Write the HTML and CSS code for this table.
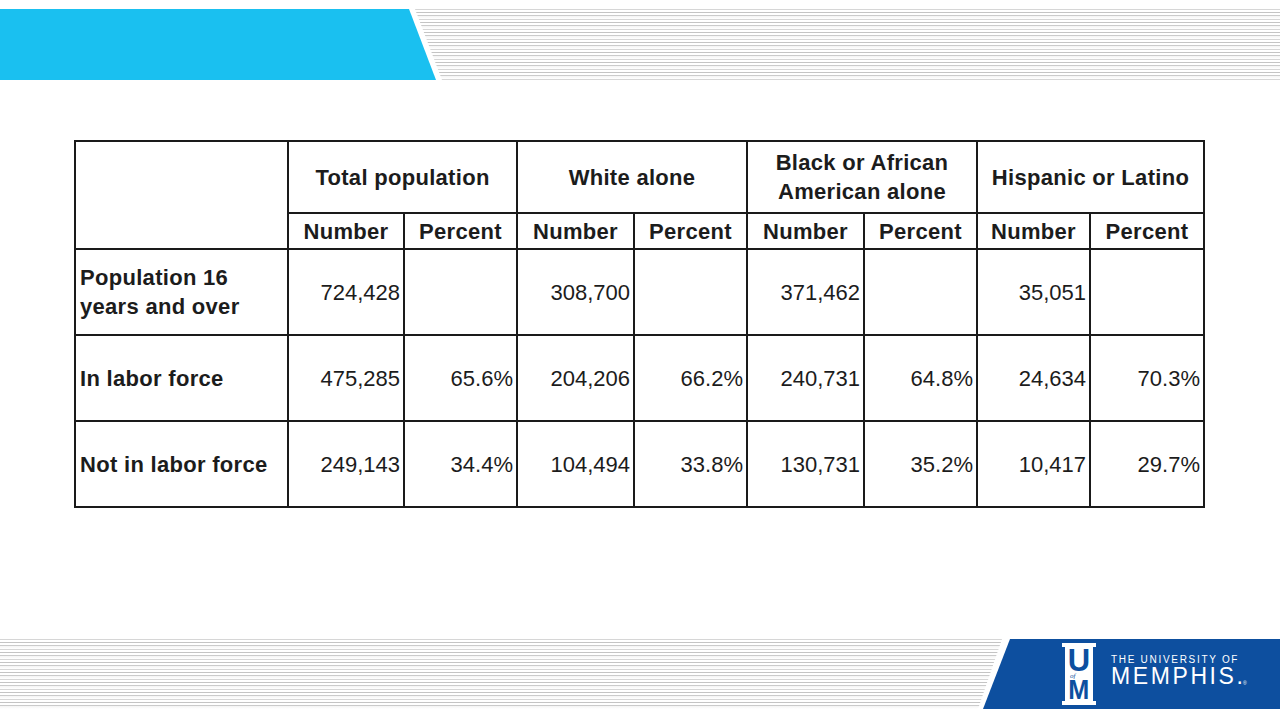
FILE: index.html
```html
<!DOCTYPE html>
<html lang="en">
<head>
<meta charset="utf-8">
<title>Labor force participation</title>
<link rel="stylesheet" href="styles.css">
</head>
<body>
<header class="top-band">
  <div class="cyan-block"></div>
  <div class="stripes top-stripes"></div>
</header>

<main class="content">
  <table class="data-table">
    <colgroup>
      <col class="c-label">
      <col class="c-num"><col class="c-pct">
      <col class="c-num2"><col class="c-pct">
      <col class="c-num2"><col class="c-pct">
      <col class="c-pct"><col class="c-pct2">
    </colgroup>
    <thead>
      <tr class="head-main">
        <th rowspan="2"></th>
        <th colspan="2">Total population</th>
        <th colspan="2">White alone</th>
        <th colspan="2">Black or African<br>American alone</th>
        <th colspan="2">Hispanic or Latino</th>
      </tr>
      <tr class="head-sub">
        <th>Number</th><th>Percent</th>
        <th>Number</th><th>Percent</th>
        <th>Number</th><th>Percent</th>
        <th>Number</th><th>Percent</th>
      </tr>
    </thead>
    <tbody>
      <tr>
        <th class="row-label">Population 16<br>years and over</th>
        <td>724,428</td><td></td>
        <td>308,700</td><td></td>
        <td>371,462</td><td></td>
        <td>35,051</td><td></td>
      </tr>
      <tr>
        <th class="row-label">In labor force</th>
        <td>475,285</td><td>65.6%</td>
        <td>204,206</td><td>66.2%</td>
        <td>240,731</td><td>64.8%</td>
        <td>24,634</td><td>70.3%</td>
      </tr>
      <tr>
        <th class="row-label">Not in labor force</th>
        <td>249,143</td><td>34.4%</td>
        <td>104,494</td><td>33.8%</td>
        <td>130,731</td><td>35.2%</td>
        <td>10,417</td><td>29.7%</td>
      </tr>
    </tbody>
  </table>
</main>

<footer class="bottom-band">
  <div class="stripes bottom-stripes"></div>
  <div class="blue-block">
    <div class="logo">
      <div class="pillar" aria-hidden="true">
        <div class="pillar-cap"></div>
        <div class="pillar-body">
          <span class="pl-u">U</span>
          <span class="pl-of">of</span>
          <span class="pl-m">M</span>
        </div>
        <div class="pillar-cap"></div>
      </div>
      <div class="logo-text">
        <span class="logo-small">THE UNIVERSITY OF</span>
        <span class="logo-big">MEMPHIS<span class="dot">.</span><span class="reg">®</span></span>
      </div>
    </div>
  </div>
</footer>
</body>
</html>
```

FILE: styles.css
```css
html, body {
  margin: 0;
  padding: 0;
  background: #ffffff;
}

body {
  width: 1280px;
  height: 720px;
  overflow: hidden;
  display: flex;
  flex-direction: column;
  font-family: "Liberation Sans", Arial, sans-serif;
  color: #1c1c1c;
}

/* ---------- stripes ---------- */
.stripes {
  background-color: #ffffff;
  background-image: repeating-linear-gradient(
    to bottom,
    #d6d6d6 0px, #d6d6d6 1px,
    #ffffff 1px, #ffffff 3px,
    #c4c4c4 3px, #c4c4c4 4px,
    #ffffff 4px, #ffffff 6px,
    #cbcbcb 6px, #cbcbcb 7px,
    #f4f4f4 7px, #ffffff 10px
  );
}

/* ---------- top band ---------- */
.top-band {
  display: flex;
  height: 71px;
  margin-top: 9px;
}

.cyan-block {
  width: 436px;
  flex: 0 0 436px;
  background: #1ac0f0;
  clip-path: polygon(0 0, 409px 0, 436px 100%, 0 100%);
}

.top-stripes {
  flex: 1;
  margin-left: -21px;
  clip-path: polygon(0 0, 100% 0, 100% 100%, 27px 100%);
}

/* ---------- table ---------- */
.content {
  padding: 60px 0 0 74px;
}

.data-table {
  border-collapse: collapse;
  table-layout: fixed;
  width: 1129px;
  font-size: 22px;
  line-height: 29px;
  color: #1c1c1c;
}

.c-label { width: 213px; }
.c-num { width: 116px; }
.c-num2 { width: 117px; }
.c-pct { width: 113px; }
.c-pct2 { width: 114px; }

.data-table th,
.data-table td {
  border: 2px solid #1a1a1a;
  padding: 0;
  vertical-align: middle;
}

.data-table th {
  font-weight: bold;
  letter-spacing: 0.3px;
  text-align: center;
}

.head-main { height: 72px; }
.head-sub { height: 36px; }

.data-table tbody tr { height: 86px; }

.data-table td {
  text-align: right;
  padding-right: 3px;
}

.data-table th.row-label {
  text-align: left;
  padding-left: 4px;
}

/* ---------- bottom band ---------- */
.bottom-band {
  display: flex;
  height: 70px;
  margin-top: auto;
  margin-bottom: 11px;
}

.bottom-stripes {
  flex: 0 0 1002px;
  clip-path: polygon(0 0, 100% 0, calc(100% - 24px) 100%, 0 100%);
}

.blue-block {
  flex: 1;
  margin-left: -19px;
  background: #0d4f9f;
  clip-path: polygon(27px 0, 100% 0, 100% 100%, 0 100%);
  display: flex;
  align-items: center;
  padding-left: 79px;
}

.logo {
  display: flex;
  align-items: center;
  gap: 15px;
}

/* pillar mark */
.pillar {
  display: flex;
  flex-direction: column;
  align-items: center;
  width: 34px;
}

.pillar-cap {
  width: 34px;
  height: 4px;
  background: #ffffff;
}

.pillar-body {
  width: 28px;
  height: 54px;
  background: #ffffff;
  display: flex;
  flex-direction: column;
  align-items: center;
  justify-content: center;
  color: #0d4f9f;
  font-family: "Liberation Sans", Arial, sans-serif;
  font-weight: bold;
}

.pl-u {
  font-size: 31px;
  line-height: 25px;
}

.pl-of {
  font-family: "Liberation Serif", serif;
  font-style: italic;
  font-weight: normal;
  font-size: 7px;
  line-height: 6px;
  align-self: flex-start;
  padding-left: 5px;
}

.pl-m {
  font-size: 28px;
  line-height: 21px;
  transform: scaleX(0.9);
}

.logo-text {
  display: flex;
  flex-direction: column;
  color: #ffffff;
  font-family: "Liberation Sans", Arial, sans-serif;
}

.logo-small {
  font-size: 10px;
  line-height: 11px;
  letter-spacing: 1.7px;
}

.logo-big {
  font-size: 23px;
  line-height: 23px;
  letter-spacing: 2.6px;
}

.logo-big .dot {
  letter-spacing: 0;
}

.logo-big .reg {
  font-size: 5px;
  letter-spacing: 0;
  vertical-align: -1px;
}
```
